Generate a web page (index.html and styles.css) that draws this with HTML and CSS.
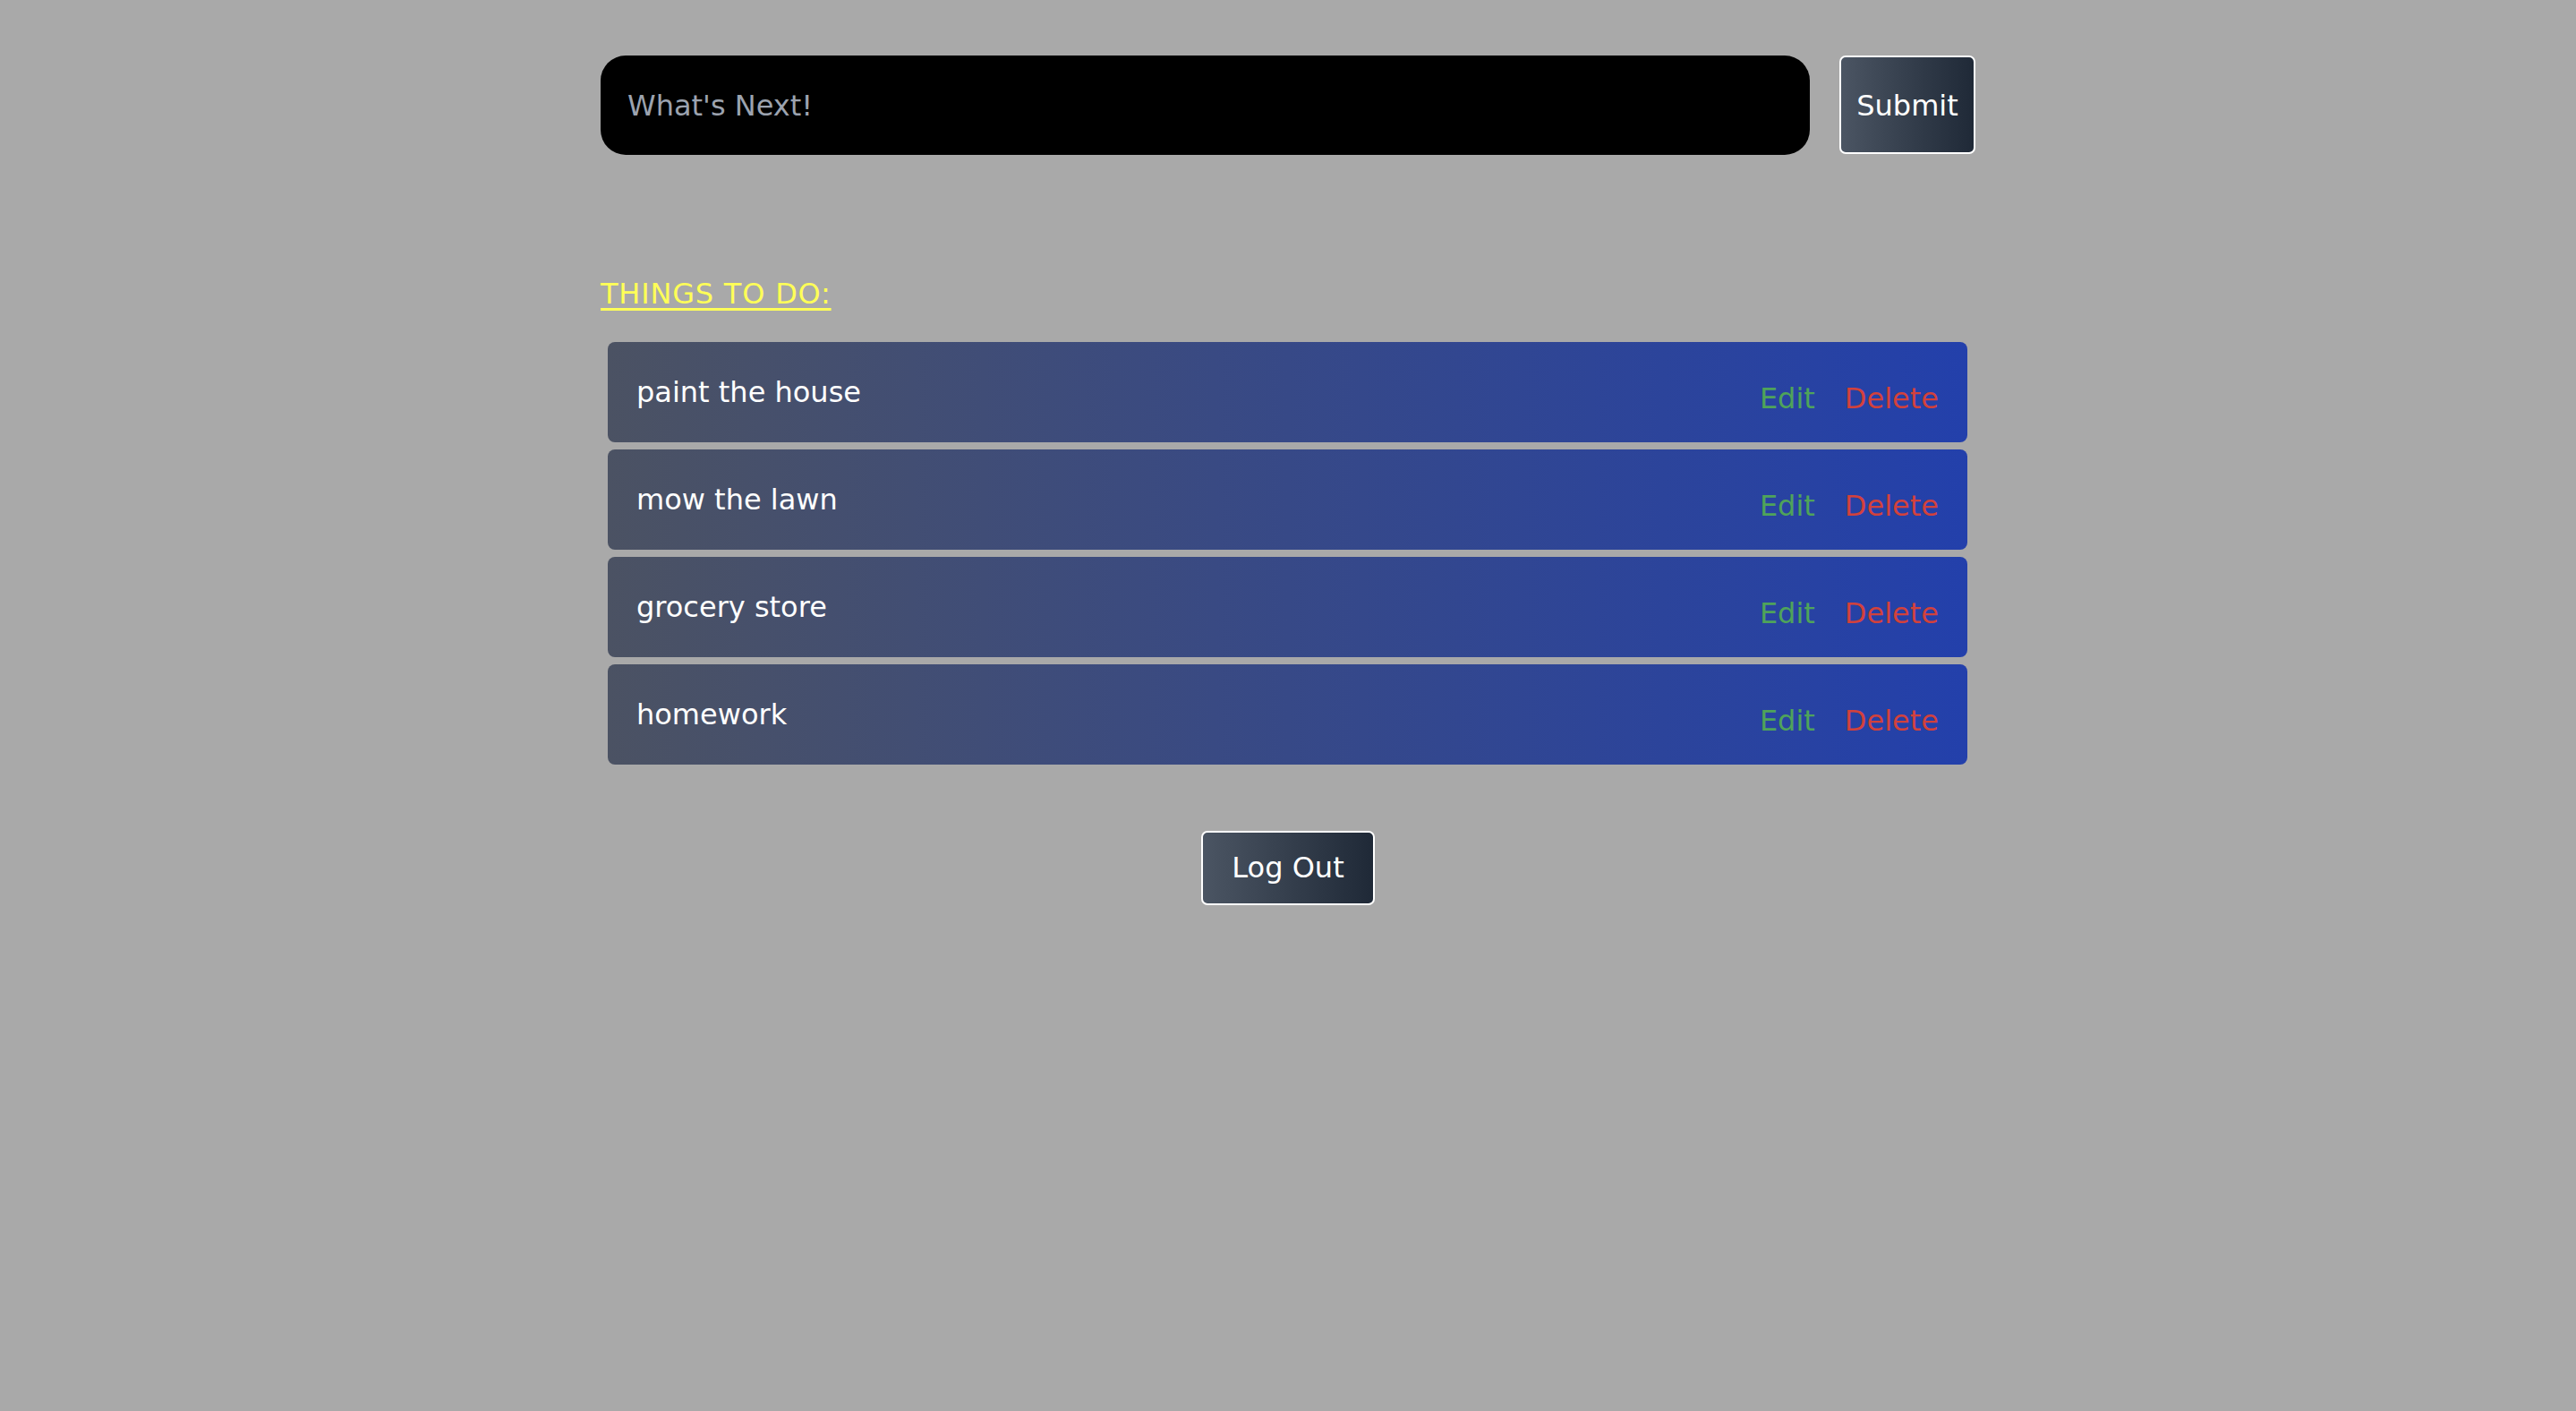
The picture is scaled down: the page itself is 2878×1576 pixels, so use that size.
FILE: index.html
```html
<!DOCTYPE html>
<html lang="en">
<head>
<meta charset="utf-8">
<title>Todo</title>
<link rel="stylesheet" href="styles.css">
</head>
<body>
<main class="app">
  <form class="entry">
    <input class="entry-input" type="text" placeholder="What's Next!">
    <button class="btn btn-submit" type="button">Submit</button>
  </form>
  <h2 class="list-title">THINGS TO DO:</h2>
  <ul class="todo-list">
    <li class="todo"><span class="todo-text">paint the house</span><span class="todo-actions"><span class="act-edit">Edit</span><span class="act-delete">Delete</span></span></li>
    <li class="todo"><span class="todo-text">mow the lawn</span><span class="todo-actions"><span class="act-edit">Edit</span><span class="act-delete">Delete</span></span></li>
    <li class="todo"><span class="todo-text">grocery store</span><span class="todo-actions"><span class="act-edit">Edit</span><span class="act-delete">Delete</span></span></li>
    <li class="todo"><span class="todo-text">homework</span><span class="todo-actions"><span class="act-edit">Edit</span><span class="act-delete">Delete</span></span></li>
  </ul>
  <div class="logout-wrap">
    <button class="btn btn-logout" type="button">Log Out</button>
  </div>
</main>
</body>
</html>
```
FILE: styles.css
```css
html, body {
  margin: 0;
  padding: 0;
}
body {
  background: #a9a9a9;
  font-family: "DejaVu Sans", Verdana, sans-serif;
  font-size: 32px;
}
.app {
  width: 1536px;
  margin: 0 auto;
  padding-top: 62px;
}
.entry {
  display: flex;
  gap: 33px;
  margin: 0;
}
.entry-input {
  flex: 1;
  height: 111px;
  box-sizing: border-box;
  background: #000;
  border: none;
  border-radius: 28px;
  padding: 0 30px;
  color: #fff;
  font-family: inherit;
  font-size: 32px;
  outline: none;
}
.entry-input::placeholder {
  color: #9ca3af;
}
.btn {
  font-family: inherit;
  font-size: 32px;
  color: #fff;
  background: linear-gradient(to right, #4b5563, #1f2937);
  border: 2px solid #fff;
  border-radius: 7px;
  cursor: pointer;
  line-height: 37px;
}
.btn-submit {
  width: 152px;
  height: 110px;
  padding: 2px 0 0;
}
.list-title {
  margin: 137px 0 35px;
  font-size: 32px;
  font-weight: normal;
  line-height: 37px;
  letter-spacing: 0.8px;
  color: #ffff57;
  text-decoration: underline;
  text-decoration-thickness: 3px;
  text-underline-offset: 5px;
}
.todo-list {
  list-style: none;
  margin: 0 9px 0 8px;
  padding: 0;
  display: flex;
  flex-direction: column;
  gap: 8.5px;
}
.todo {
  height: 111.5px;
  box-sizing: border-box;
  padding: 0 32px;
  display: flex;
  align-items: center;
  justify-content: space-between;
  border-radius: 8px;
  background: linear-gradient(to right, #4b5263, #2340ab);
  color: #fff;
}
.todo-actions {
  display: flex;
  gap: 33px;
  margin-top: 15px;
}
.act-edit {
  color: #4fa35a;
}
.act-delete {
  color: #d2413c;
}
.logout-wrap {
  display: flex;
  justify-content: center;
  margin-top: 74px;
}
.btn-logout {
  height: 83px;
  padding: 0 32px;
}
```
